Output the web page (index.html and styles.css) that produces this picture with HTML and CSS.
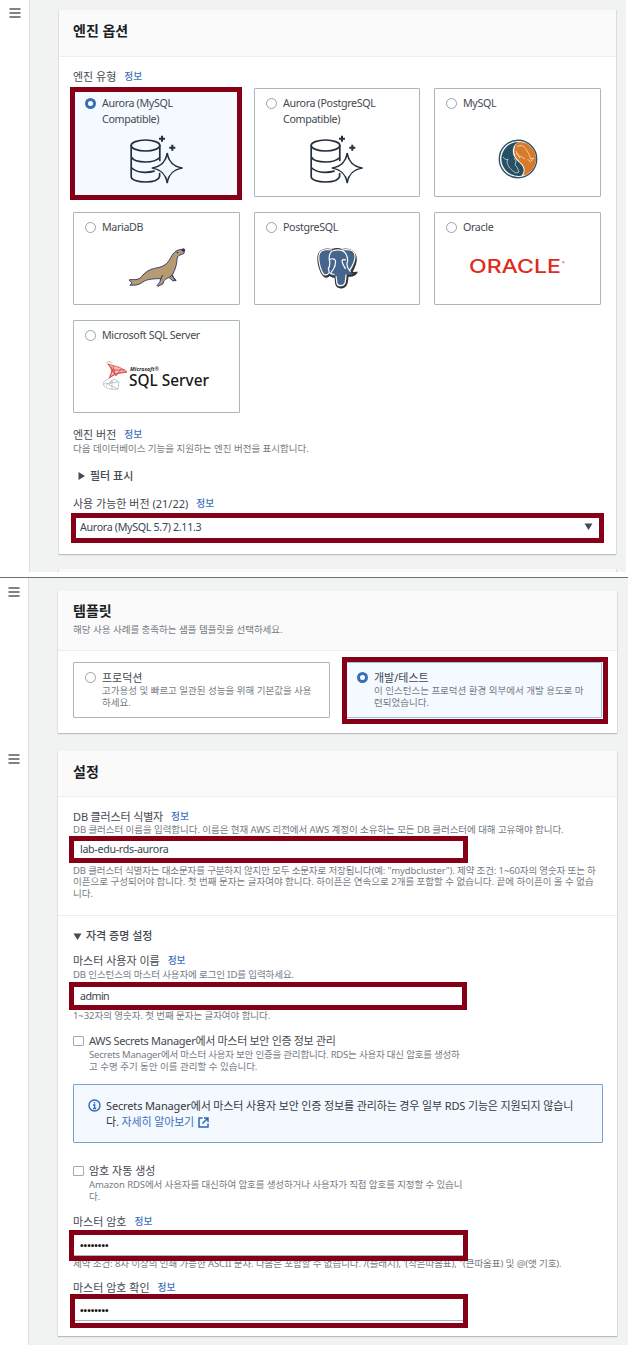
FILE: index.html
```html
<!DOCTYPE html>
<html lang="ko">
<head>
<meta charset="utf-8">
<title>데이터베이스 생성</title>
<link rel="stylesheet" href="styles.css">
</head>
<body>
<svg class="defs" aria-hidden="true">
  <symbol id="menu" viewBox="0 0 12 10"><path d="M.5 1h11M.5 5h11M.5 9h11" stroke="#545b64" stroke-width="1.5"/></symbol>
  <symbol id="aurora" viewBox="0 0 54 50">
    <g fill="none" stroke="#232f3e" stroke-width="1.7" stroke-linejoin="round" stroke-linecap="round">
      <ellipse cx="15.500" cy="10.500" rx="14.300" ry="5.500"/>
      <path d="M1.200 10.500v31c0 3.200 6.300 5.500 14.300 5.500 7.500 0 13.200-2 14.100-5.500v-3M29.800 10.500v15M1.200 22c2 3.300 7.700 5 14.300 5 6.500 0 11.500-1.500 14.300-4.500M1.200 32.500c3.500 3.500 8.500 5 14.300 4.800 3.500 0 6-.4 8.500-1.200"/>
      <path d="M37.200 18.500c1.600 8.500 5.800 12.700 14.800 14.500-9 1.800-13.200 6-14.800 14.500-1.600-8.500-5.800-12.700-14.800-14.500 9-1.800 13.200-6 14.800-14.500z"/>
    </g>
    <path d="M32 .8v6M29 3.800h6M42.300 9.800v6M39.300 12.800h6" stroke="#232f3e" stroke-width="2"/>
  </symbol>
  <symbol id="right" viewBox="0 0 7 8"><path d="M.5 0 7 4 .5 8z" fill="#444c55"/></symbol>
  <symbol id="down" viewBox="0 0 9 7"><path d="M.5.500h8L4.500 7z" fill="#444c55"/></symbol>
</svg>

<section class="shot shot-engine">
  <nav class="rail"><svg class="menu"><use href="#menu"/></svg></nav>
  <main class="main">
    <div class="panel engine">
      <header class="head"><h2 class="title wide">엔진 옵션</h2></header>
      <div class="body">
        <div class="label type-label"><span class="t1">엔진 유형</span><a class="info">정보</a></div>
        <div class="engines">
          <div class="card tall selected"><i class="radio on"></i><span class="name">Aurora (MySQL<br>Compatible)</span><svg class="logo aurora"><use href="#aurora"/></svg><i class="mark mark-engine"></i></div>
          <div class="card tall"><i class="radio"></i><span class="name">Aurora (PostgreSQL<br>Compatible)</span><svg class="logo aurora"><use href="#aurora"/></svg></div>
          <div class="card tall"><i class="radio"></i><span class="name">MySQL</span>
            <svg class="logo mysql" viewBox="0 0 40 40">
              <circle cx="20" cy="20" r="18.700" fill="#fff" stroke="#2d5266" stroke-width="1.400"/>
              <path d="M21 3A17 17 0 1 0 23.500 36.700c3.500-4.500 2.500-8.500-1-12-4.500-4.500-8.500-8-7.500-14.500.5-3.500 2.500-6 6-7.200z" fill="#285064"/>
              <path d="M22 3a17 17 0 0 1 3 33.500c2.500-4.500 2-8.500-1.500-12-5-5-8-8-7.200-14C16.800 6 18.500 3.700 22 3z" fill="#d67b2c"/>
              <path d="M19 8c4-3 7-1 9.500 3 2 4 3 4 4 9l3-1-3 4-3-3M18 12c1 3 4 6 6 6l3 2M18 14l4 5M5 18l3 3 2-1-1 3c1 5 4 8 9 11l3-1-2-5-2-2 1-4-2-3" fill="none" stroke="#fff" stroke-width=".7" opacity=".85"/>
            </svg></div>
          <div class="card"><i class="radio"></i><span class="name">MariaDB</span>
            <svg class="logo maria" viewBox="0 0 58 40">
              <path d="M1 32c2-1 5 0 8-.5 5-1 5-5 10-8 6-4 11-3 16-5.500 6-3 7-8 10-12C47 3.500 49 2 52 1.700l4-.9.800 1.200-1 3.500-4.800 1.800c-2 1.700-2 4-2.300 7-.5 5-2.500 8.700-4.200 12.200l.6 2.500 2.900 3.500-3 .4-4-3.400-1.700.8c-3 1-3.600 3-4.300 5.500L30 38.300l-1-.8 2.800-3.300 1-3.500c-5-.2-8 .2-12 .8-5 .5-7 4.700-12.500 5.500L2 37.300l2-2.500z" fill="#b89a70" stroke="#34417a" stroke-width="1" stroke-linejoin="round"/>
              <path d="m34.500 27-1.800 4.500M42 29l2.500-2.500M48 33l-4-5.500" stroke="#27346b" stroke-width="1"/>
              <path d="m53 1.500 3.800-.6-.9 3-2-1.200" fill="#202b58"/><circle cx="49.500" cy="4.500" r=".8" fill="#202b58"/>
            </svg></div>
          <div class="card"><i class="radio"></i><span class="name">PostgreSQL</span>
            <svg class="logo postgres" viewBox="0 0 40 41">
              <path d="M15 2C8 .7 2 2 1.300 9c-.5 6 2 15 5.500 18.500 2 2 4 1.500 5.500-.5l1.500.5c1.200 1.500 3 1.500 4.700 1.500l.5 6c.4 4 3 4.800 6 4.500 3.500-.5 5-3 5.300-8.500l.4-3.500c4.500.8 7-.2 8.500-2.700-1.800.2-4 .1-4.700-.9C38 18 40 11.500 38 7 35.500 1.500 29 .5 25 2 21.500.5 18 1 15 2z" fill="#45658f" stroke="#333" stroke-width="1.900"/>
              <path d="M15 2C8 .7 2 2 1.800 9c-.4 6 2.500 15 5 17.500 2 1 4 0 5.500-2l-1-4c1.500-2 2-5 .9-9.500C12 6 13 3.500 17 2.300c5-1 9-.5 11.500 3 2.500 4 2.700 7 1.500 10-1 3 2 6 3.500 8.500M25 2c7-1 13 0 13 7-.2 5-3.500 10.500-5.500 13.500M12 12c3-2 6-1.500 6.500 1 .3 4-.2 5-2 8l-3 4.500 4 1M29 12c-2-.8-3.500-.6-4 1 .3 3 2 5 3.500 8M19 28l1 7.500c.8 3 6.500 3 8-.5.8-3 .5-5 1.200-8.500" fill="none" stroke="#fff" stroke-width="1.200"/>
            </svg></div>
          <div class="card"><i class="radio"></i><span class="name">Oracle</span>
            <svg class="logo oracle" viewBox="0 0 98 16"><text x="0" y="14" textLength="92" lengthAdjust="spacingAndGlyphs">ORACLE</text><text class="reg" x="93" y="5">®</text></svg></div>
          <div class="card"><i class="radio"></i><span class="name">Microsoft SQL Server</span>
            <svg class="logo mssql" viewBox="0 0 110 30">
              <g fill="none" stroke="#d8433c" stroke-width=".8"><path d="M6 3c5 2 12 2 19 8-7 0-12 2-18 6 3-5 4-9-1-14z" fill="#d8433c" fill-opacity=".35"/><path d="m6 3 7 10 12-2M9 6l5 9 5-7M8 15l3-6 12 0M7 17l6-4-2-8"/></g>
              <path d="M10 2C7-.5 3 1 6 4M7 18c-5 1-7 4-5 7 3 3 9 4 14 3l1-7-5-3-5 6 9 4M2 23l14-2M4 25l6-6v9" fill="none" stroke="#b4b9bb" stroke-width=".8"/>
              <text class="ms" x="28" y="9.500" textLength="29" lengthAdjust="spacingAndGlyphs">Microsoft®</text>
              <text class="sql" x="27" y="25" textLength="80" lengthAdjust="spacingAndGlyphs">SQL Server</text>
            </svg></div>
        </div>
        <div class="label version-label"><span class="t1">엔진 버전</span><a class="info">정보</a></div>
        <p class="hint d1">다음 데이터베이스 기능을 지원하는 엔진 버전을 표시합니다.</p>
        <div class="expander filter"><svg class="tri-r"><use href="#right"/></svg><span>필터 표시</span></div>
        <div class="label avail"><span class="t2">사용 가능한 버전 (21/22)</span><a class="info">정보</a></div>
        <div class="field select"><span class="v1">Aurora (MySQL 5.7) 2.11.3</span><svg class="tri-d"><use href="#down"/></svg></div>
      </div>
    </div>
    <div class="panel next"></div>
  </main>
</section>

<section class="shot shot-settings">
  <nav class="rail"><svg class="menu"><use href="#menu"/></svg><svg class="menu second"><use href="#menu"/></svg></nav>
  <main class="main">
    <div class="panel template">
      <header class="head"><h2 class="title">템플릿</h2><p class="hint d2">해당 사용 사례를 충족하는 샘플 템플릿을 선택하세요.</p></header>
      <div class="body options">
        <div class="card option"><i class="radio"></i><div><b class="opt-name o1">프로덕션</b><p class="hint d3">고가용성 및 빠르고 일관된 성능을 위해 기본값을 사용<br>하세요.</p></div></div>
        <div class="card option selected"><i class="radio on"></i><div><b class="opt-name o2">개발/테스트</b><p class="hint d4">이 인스턴스는 프로덕션 환경 외부에서 개발 용도로 마<br>련되었습니다.</p></div><i class="mark mark-option"></i></div>
      </div>
    </div>
    <div class="panel settings">
      <header class="head"><h2 class="title">설정</h2></header>
      <div class="body">
        <div class="label id-label"><span class="t3">DB 클러스터 식별자</span><a class="info">정보</a></div>
        <p class="hint d5">DB 클러스터 이름을 입력합니다. 이름은 현재 AWS 리전에서 AWS 계정이 소유하는 모든 DB 클러스터에 대해 고유해야 합니다.</p>
        <div class="field id-field"><span class="v2">lab-edu-rds-aurora</span></div>
        <p class="hint d6"><span class="snug">DB 클러스터 식별자는 대소문자를 구분하지 않지만 모두 소문자로 저장됩니다(예: "mydbcluster"). 제약 조건: 1~60자의 영숫자 또는 하</span><br>이픈으로 구성되어야 합니다. 첫 번째 문자는 글자여야 합니다. 하이픈은 연속으로 2개를 포함할 수 없습니다. 끝에 하이픈이 올 수 없습<br>니다.</p>
      </div>
      <div class="body credentials">
        <div class="expander"><svg class="tri-d"><use href="#down"/></svg><span class="t4">자격 증명 설정</span></div>
        <div class="label user-label"><span class="t5">마스터 사용자 이름</span><a class="info">정보</a></div>
        <p class="hint d7">DB 인스턴스의 마스터 사용자에 로그인 ID를 입력하세요.</p>
        <div class="field user-field"><span class="v3">admin</span></div>
        <p class="hint d8">1~32자의 영숫자. 첫 번째 문자는 글자여야 합니다.</p>
        <div class="check c1"><i class="box"></i><div><span class="opt-name t6">AWS Secrets Manager에서 마스터 보안 인증 정보 관리</span><p class="hint d9"><span class="snugger">Secrets Manager에서 마스터 사용자 보안 인증을 관리합니다. RDS는 사용자 대신 암호를 생성하</span><br>고 수명 주기 동안 이를 관리할 수 있습니다.</p></div></div>
        <div class="notice">
          <svg class="info-icon" viewBox="0 0 13 13"><circle cx="6.500" cy="6.500" r="5.500" fill="none" stroke="#2f68b8" stroke-width="1.400"/><path d="M6.500 3v1.600M5 6h1.700v3.500M4.900 9.500h3.300" fill="none" stroke="#2f68b8" stroke-width="1.300"/></svg>
          <p class="notice-text">Secrets Manager에서 마스터 사용자 보안 인증 정보를 관리하는 경우 일부 RDS 기능은 지원되지 않습니<br>다. <a class="more">자세히 알아보기</a><svg class="ext" viewBox="0 0 11 11"><path d="M4.500 1H1v9h9V6.500M6 1h4v4M10 1 4.500 6.500" fill="none" stroke="#2f68b8" stroke-width="1.500"/></svg></p>
        </div>
        <div class="check c2"><i class="box"></i><div><span class="opt-name t7">암호 자동 생성</span><p class="hint d10">Amazon RDS에서 사용자를 대신하여 암호를 생성하거나 사용자가 직접 암호를 지정할 수 있습니<br>다.</p></div></div>
        <div class="label pw-label"><span class="t8">마스터 암호</span><a class="info">정보</a></div>
        <div class="field pw-field"><span class="dots">••••••••</span></div>
        <p class="hint d11">제약 조건: 8자 이상의 인쇄 가능한 ASCII 문자. 다음은 포함할 수 없습니다. /(슬래시), '(작은따옴표), "(큰따옴표) 및 @(앳 기호).</p>
        <div class="label confirm-label"><span class="t9">마스터 암호 확인</span><a class="info">정보</a></div>
        <div class="field confirm-field"><span class="dots">••••••••</span></div>
      </div>
    </div>
  </main>
</section>
</body>
</html>
```
FILE: styles.css
```css
* { box-sizing: border-box; }
body { margin: 0; width: 628px; height: 1345px; overflow: hidden; background: #fff; color: #444950; font: 11px/14px "Noto Sans", "Noto Sans CJK KR", sans-serif; }
h2, p { margin: 0; font-weight: 400; }
i, b { font-style: normal; font-weight: 400; }
.defs { position: absolute; width: 0; height: 0; }
.shot { display: flex; overflow: hidden; background: #f1f3f3; }
.shot-engine { width: 626px; height: 572px; margin-bottom: 5px; }
.shot-settings { height: 768px; border-top: 1px solid #6d727b; }
.rail { flex: none; width: 30px; background: #fff; border-right: 1px solid #dcdfe0; padding: 8px 0 0 9px; }
.shot-settings .rail { width: 29px; padding: 9px 0 0 8px; }
.menu { display: block; width: 12px; height: 10px; }
.menu.second { margin-top: 157px; }
.main { flex: 1; min-width: 0; padding: 10px 10px 0 29px; }
.shot-settings .main { padding: 13px 11px 0 29px; }
.panel { background: #fff; box-shadow: 0 1px 1px #b9bdbf, 1px 0 0 #dfe1e2, -1px 0 0 #e7e9e9; }
.head { background: #fafafa; border-bottom: 1px solid #eceeee; padding: 0 14px; }
.body { padding: 0 14px; display: flex; flex-direction: column; }
.shot-settings .head, .shot-settings .body { padding-left: 15px; }
.title { color: #1b1f26; font-size: 14px; font-weight: 700; line-height: 20px; }
.label, .expander { display: flex; align-items: center; height: 14px; white-space: nowrap; }
.info { margin-left: 8px; font-size: 9.700px; color: #3a6fbd; font-weight: 500; }
.hint { font-size: 9.500px; line-height: 11.500px; color: #757b82; white-space: nowrap; }

.engine { height: 544px; }
.engine .head { height: 47px; padding-top: 11px; }
.type-label { margin-top: 13px; }
.engines { margin-top: 4px; display: grid; grid-template-columns: 167px 166px 167px; column-gap: 14px; grid-template-rows: 109px 93px 93px; row-gap: 15px; }
.card { position: relative; display: grid; grid-template-columns: 11px 1fr; column-gap: 6px; align-content: start; border: 1px solid #aab7b8; border-radius: 1px; padding: 6px 11px 0; }
.card.selected { background: #f4faff; border-color: #9cc4dc; }
.radio { width: 11px; height: 11px; margin-top: 3px; border: 1px solid #98a5a7; border-radius: 50%; background: #fff; }
.radio.on { border: 3.500px solid #3a6fb8; }
.name { height: 16px; line-height: 16px; font-size: 10.700px; letter-spacing: -.35px; white-space: nowrap; }
.logo { grid-column: 1 / 3; justify-self: center; display: block; overflow: visible; }
.aurora { width: 54px; height: 50px; margin-top: 24px; }
.mysql { width: 40px; height: 40px; margin-top: 28px; }
.maria { width: 58px; height: 40px; margin-top: 13px; }
.postgres { width: 40px; height: 41px; margin-top: 13px; }
.oracle { width: 98px; height: 16px; margin-top: 24px; }
.mssql { width: 110px; height: 30px; margin-top: 18px; }
.oracle text { font: 500 18px Inter, sans-serif; fill: #e02b1d; }
.oracle .reg { font-size: 4px; }
.ms { font: italic 700 6px "Noto Sans", sans-serif; fill: #333; }
.sql { font: 500 17px "Noto Sans", sans-serif; fill: #171717; }
.mark { position: absolute; border: 5px solid #850016; }
.mark-engine { inset: -2px -3px -4px -4px; }
.mark-option { inset: -6px -7px -7px -4px; }
.version-label { margin-top: 15px; }
.d1 { margin-top: 1px; }
.filter { margin: 14px 0 0 5px; }
.filter span { margin-left: 5px; }
.tri-r { width: 7px; height: 8px; }
.tri-d { width: 9px; height: 7px; }
.avail { margin-top: 14px; }
.field { border: 5px solid #850016; background: #fff; display: flex; align-items: center; font-size: 10.700px; letter-spacing: -.32px; color: #3e444b; padding-left: 6px; white-space: nowrap; flex: none; }
.select { width: 533px; height: 30px; margin: 2px 0 0 -2px; padding-left: 4px; padding-right: 6px; padding-bottom: 2px; justify-content: space-between; }
.next { height: 20px; margin-top: 15px; background: #fafafa; }

.template { height: 142px; }
.template .head { height: 60px; padding-top: 10px; }
.template .title { line-height: 20px; }
.d2 { margin-top: 3px; }
.options { display: grid; grid-template-columns: 257px 257px; column-gap: 15px; padding-top: 11px; }
.option { height: 56px; padding-top: 8px; }
.option .radio { margin-top: 1px; }
.opt-name { display: block; height: 14px; white-space: nowrap; }
.settings { height: 585px; margin-top: 18px; }
.settings .head { height: 46px; padding-top: 11px; }
.id-label { margin-top: 13px; }
.t3 { letter-spacing: -.15px; }
.d5 { letter-spacing: -.06px; }
.id-field { width: 399px; height: 27px; margin: 0 0 0 -4px; }
.d6 { margin-top: 2px; }
.snug { letter-spacing: -.13px; }
.snugger { letter-spacing: -.2px; }
.credentials { border-top: 1px solid #eceeee; margin-top: 16px; padding-top: 13px; }
.expander .tri-d { margin-right: 4px; }
.expander { font-weight: 500; }
.user-label { margin-top: 11px; }
.d7 { margin-top: 1px; letter-spacing: -.1px; }
.d8 { letter-spacing: -.06px; }
.user-field { width: 398px; height: 28px; margin: 1px 0 0 -4px; }
.v3 { letter-spacing: -.55px; }
.check { display: flex; gap: 5px; }
.check .hint { margin-top: 1px; }
.box { flex: none; width: 11px; height: 10px; margin-top: 2px; border: 1px solid #9eabac; border-radius: 1px; }
.c1 { margin-top: 13px; }
.t6 { letter-spacing: -.32px; }
.notice { display: flex; width: 530px; height: 59px; margin-top: 12px; border: 1px solid #7a9fd0; border-radius: 1px; background: #f3f9ff; padding: 13px 14px; gap: 5px; }
.info-icon { width: 13px; height: 13px; margin-top: 1px; flex: none; }
.notice-text { line-height: 15.500px; white-space: nowrap; color: #343a42; letter-spacing: -.14px; }
.more { color: #3a6fbd; }
.ext { width: 11px; height: 11px; margin-left: 4px; vertical-align: -2px; }
.c2 { margin-top: 21px; }
.d10 { letter-spacing: -.1px; }
.pw-label { margin-top: 13px; }
.pw-field { width: 399px; height: 31px; margin: 1px 0 0 -4px; position: relative; z-index: 1; box-shadow: inset 0 -1px #aab7b8; }
.d11 { margin-top: -3px; letter-spacing: -.07px; }
.confirm-label { margin-top: 11px; }
.confirm-field { width: 398px; height: 34px; margin: -1px 0 0 -3px; padding-left: 5px; box-shadow: inset 0 -2px #fff, inset 0 -3px #aab7b8; }
.dots { color: #111; letter-spacing: 0; font: 700 9.500px "Noto Sans", sans-serif; }
```
